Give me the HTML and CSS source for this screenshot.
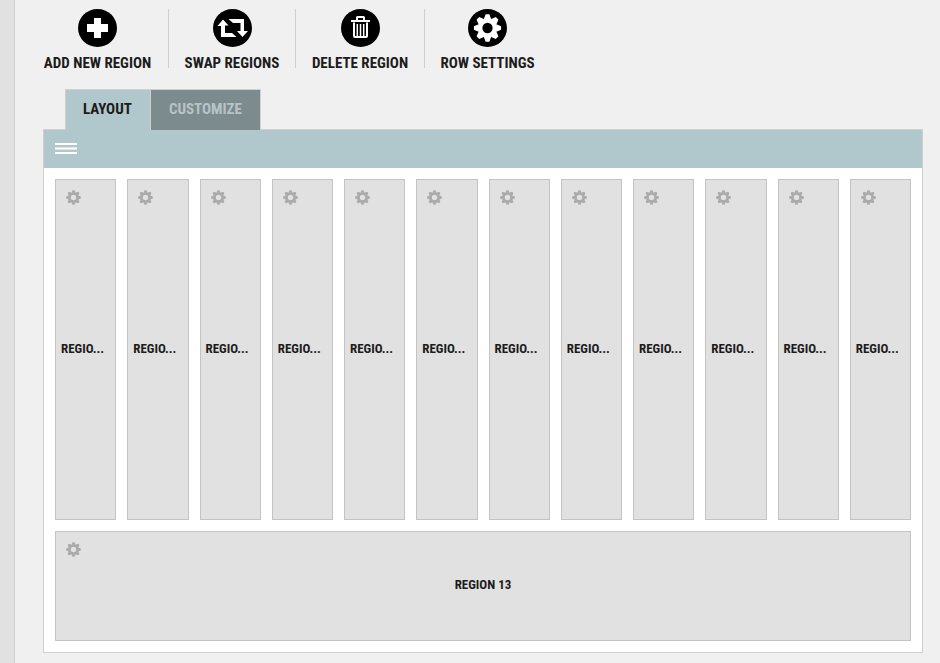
FILE: index.html
```
<!DOCTYPE html>
<html lang="en">
<head>
<meta charset="utf-8">
<title>Row layout editor</title>
<link rel="stylesheet" href="styles.css">
</head>
<body>
<svg class="sprite" aria-hidden="true">
  <symbol id="gear" viewBox="-15 -15 30 30">
    <circle r="8" fill="none" stroke="currentColor" stroke-width="5"/>
    <g fill="currentColor">
      <path id="tooth" d="M-4-9.5 -2-14.6H2L4-9.5z"/>
      <use href="#tooth" transform="rotate(45)"/>
      <use href="#tooth" transform="rotate(90)"/>
      <use href="#tooth" transform="rotate(135)"/>
      <use href="#tooth" transform="rotate(180)"/>
      <use href="#tooth" transform="rotate(225)"/>
      <use href="#tooth" transform="rotate(270)"/>
      <use href="#tooth" transform="rotate(315)"/>
    </g>
  </symbol>
</svg>
<div class="page">
  <aside class="rail"></aside>
  <main class="editor">
    <div class="toolbar">
      <button class="tool" type="button">
        <svg class="tool-icon" viewBox="0 0 39 38"><ellipse cx="19.5" cy="19" rx="19.5" ry="19"/><path fill="#fff" d="M16 9h7v6h7v8h-7v6h-7v-6H9v-8h7z"/></svg>
        <span>ADD NEW REGION</span>
      </button>
      <button class="tool" type="button">
        <svg class="tool-icon" viewBox="0 0 39 38"><ellipse cx="19.5" cy="19" rx="19.5" ry="19"/><path fill="#fff" d="M4.5 17 10 10.5 15.500 16.500H12V24H19L23.500 28H8V17zM15.500 10H31V22H35L29.500 28 24 22H27.500V14H20z"/></svg>
        <span>SWAP REGIONS</span>
      </button>
      <button class="tool" type="button">
        <svg class="tool-icon" viewBox="0 0 39 38"><ellipse cx="19.5" cy="19" rx="19.5" ry="19"/><path fill="#fff" d="M10 11h19v2H10zM15 11V8.500q0-1.500 1.500-1.500h6q1.500 0 1.500 1.500V11h-2V9h-5v2z"/><path fill="none" stroke="#fff" stroke-width="2" d="M13 13.500V27q0 1 1 1h11q1 0 1-1V13.500"/><path fill="none" stroke="#fff" stroke-width="1.500" d="M16.300 15v12M19.500 15v12M22.700 15v12"/></svg>
        <span>DELETE REGION</span>
      </button>
      <button class="tool" type="button">
        <svg class="tool-icon" viewBox="0 0 39 38"><ellipse cx="19.5" cy="19" rx="19.5" ry="19"/><use href="#gear" x="5.500" y="5" width="28" height="28" color="#fff"/></svg>
        <span>ROW SETTINGS</span>
      </button>
    </div>
    <div class="tabs" role="tablist">
      <button class="tab tab-active" type="button" role="tab" aria-selected="true">LAYOUT</button>
      <button class="tab" type="button" role="tab" aria-selected="false">CUSTOMIZE</button>
    </div>
    <section class="panel">
      <header class="panel-head">
        <button class="drag" type="button" aria-label="Move row"><svg viewBox="0 0 22 11"><path fill="#fff" d="M0 0h22v2H0zM0 5h22v1H0zM0 9h22v2H0z"/><path fill="#dbe6e8" d="M0 4h22v1H0zM0 6h22v1H0z"/></svg></button>
      </header>
      <div class="regions">
        <article class="region"><button class="gear" type="button" aria-label="Region settings"><svg><use href="#gear"/></svg></button><span class="name">REGIO...</span></article>
        <article class="region"><button class="gear" type="button" aria-label="Region settings"><svg><use href="#gear"/></svg></button><span class="name">REGIO...</span></article>
        <article class="region"><button class="gear" type="button" aria-label="Region settings"><svg><use href="#gear"/></svg></button><span class="name">REGIO...</span></article>
        <article class="region"><button class="gear" type="button" aria-label="Region settings"><svg><use href="#gear"/></svg></button><span class="name">REGIO...</span></article>
        <article class="region"><button class="gear" type="button" aria-label="Region settings"><svg><use href="#gear"/></svg></button><span class="name">REGIO...</span></article>
        <article class="region"><button class="gear" type="button" aria-label="Region settings"><svg><use href="#gear"/></svg></button><span class="name">REGIO...</span></article>
        <article class="region"><button class="gear" type="button" aria-label="Region settings"><svg><use href="#gear"/></svg></button><span class="name">REGIO...</span></article>
        <article class="region"><button class="gear" type="button" aria-label="Region settings"><svg><use href="#gear"/></svg></button><span class="name">REGIO...</span></article>
        <article class="region"><button class="gear" type="button" aria-label="Region settings"><svg><use href="#gear"/></svg></button><span class="name">REGIO...</span></article>
        <article class="region"><button class="gear" type="button" aria-label="Region settings"><svg><use href="#gear"/></svg></button><span class="name">REGIO...</span></article>
        <article class="region"><button class="gear" type="button" aria-label="Region settings"><svg><use href="#gear"/></svg></button><span class="name">REGIO...</span></article>
        <article class="region"><button class="gear" type="button" aria-label="Region settings"><svg><use href="#gear"/></svg></button><span class="name">REGIO...</span></article>
        <article class="region region-wide"><button class="gear" type="button" aria-label="Region settings"><svg><use href="#gear"/></svg></button><span class="name">REGION 13</span></article>
      </div>
    </section>
  </main>
</div>
</body>
</html>
```
FILE: styles.css
```
* {
  box-sizing: border-box;
}

body {
  margin: 0;
  background: #f0f0f0;
  color: #1c1c1c;
  font-family: "Roboto Condensed", "Liberation Sans Narrow", Roboto, sans-serif;
  font-size: 15px;
  font-weight: 700;
}

button {
  margin: 0;
  padding: 0;
  border: 0;
  background: none;
  color: inherit;
  font: inherit;
}

svg {
  display: block;
}

.sprite {
  position: absolute;
  width: 0;
  height: 0;
}

.page {
  display: flex;
  min-height: 100vh;
}

.rail {
  flex: 0 0 15px;
  background: #e1e1e1;
  border-right: 1px solid #cfcfcf;
}

.editor {
  flex: 1;
  min-width: 0;
  padding: 9px 17px 10px 28px;
}

.toolbar {
  display: grid;
  grid-template-columns: 125px 127px 129px 126px;
}

.tool {
  display: flex;
  flex-direction: column;
  align-items: center;
  gap: 6px;
  height: 59px;
  padding: 0 16px;
  border-left: 1px solid #cfcfcf;
  line-height: 20px;
  white-space: nowrap;
}

.tool:first-child {
  padding-left: 0;
  border-left: 0;
}

.tool-icon {
  flex: none;
  width: 39px;
  height: 38px;
}

.tabs {
  position: relative;
  display: flex;
  margin: 21px 0 -1px 22px;
}

.tab {
  height: 41px;
  padding: 0 18px 2px;
  border: 1px solid #cfcfcf;
  border-width: 1px 1px 0 0;
  background: #7c8b8e;
  color: #b9c3c6;
}

.tab-active {
  padding-left: 17px;
  border-left-width: 1px;
  background: #b0c7cc;
  color: #1c1c1c;
}

.panel {
  border: 1px solid #cfcfcf;
  background: #fff;
}

.panel-head {
  display: flex;
  align-items: center;
  height: 38px;
  padding: 0 11px 1px;
  background: #b0c7cc;
}

.drag,
.drag svg {
  width: 22px;
  height: 11px;
}

.regions {
  display: grid;
  grid-template-columns: repeat(12, minmax(0, 1fr));
  grid-template-rows: 341px 110px;
  gap: 11px;
  padding: 11px;
}

.region {
  position: relative;
  display: flex;
  align-items: center;
  padding: 0 5px 2px;
  border: 1px solid #c3c3c3;
  background: #e1e1e1;
}

.region-wide {
  grid-column: 1 / -1;
  justify-content: center;
}

.gear {
  position: absolute;
  top: 10px;
  left: 10px;
  color: #a9a9a9;
}

.gear svg {
  width: 15px;
  height: 15px;
}

.name {
  font-size: 13px;
  line-height: 16px;
  white-space: nowrap;
}
```
